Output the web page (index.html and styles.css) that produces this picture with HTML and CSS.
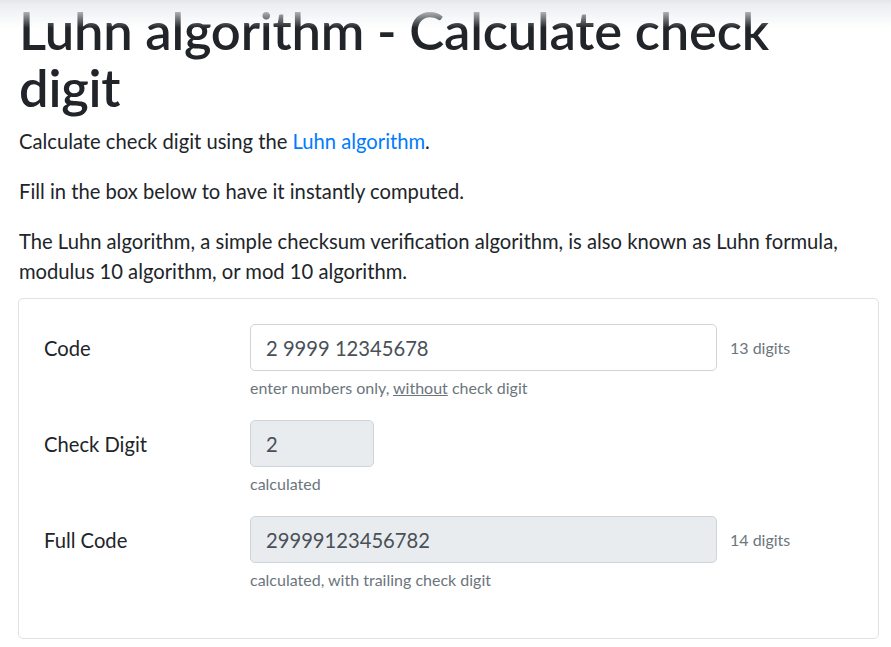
FILE: index.html
```html
<!DOCTYPE html>
<html lang="en">
<head>
<meta charset="utf-8">
<title>Luhn algorithm - Calculate check digit</title>
<link rel="stylesheet" href="styles.css">
</head>
<body>
<div class="topshade"></div>
<main class="container">
  <h1 class="title">Luhn algorithm - Calculate check digit</h1>
  <p>Calculate check digit using the <a href="#">Luhn algorithm</a>.</p>
  <p>Fill in the box below to have it instantly computed.</p>
  <p class="last-p">The Luhn algorithm, a simple checksum verification algorithm, is also known as Luhn formula, modulus 10 algorithm, or mod 10 algorithm.</p>
  <section class="card">
    <div class="form-row">
      <label class="label">Code</label>
      <div class="field">
        <div class="input-line">
          <div class="input wide">2 9999 12345678</div>
          <span class="count">13 digits</span>
        </div>
        <small class="help">enter numbers only, <u>without</u> check digit</small>
      </div>
    </div>
    <div class="form-row">
      <label class="label">Check Digit</label>
      <div class="field">
        <div class="input-line">
          <div class="input narrow disabled">2</div>
        </div>
        <small class="help">calculated</small>
      </div>
    </div>
    <div class="form-row last">
      <label class="label">Full Code</label>
      <div class="field">
        <div class="input-line">
          <div class="input wide disabled">29999123456782</div>
          <span class="count">14 digits</span>
        </div>
        <small class="help">calculated, with trailing check digit</small>
      </div>
    </div>
  </section>
</main>
</body>
</html>
```
FILE: styles.css
```css
html, body {
  margin: 0;
  padding: 0;
  background: #fff;
}
body {
  font-family: Lato, "Open Sans", sans-serif;
  font-size: 20.2px;
  line-height: 30px;
  color: #212529;
}
.topshade {
  position: fixed;
  top: 0;
  left: 0;
  right: 0;
  height: 28px;
  background: linear-gradient(to bottom, #e4e7ea 0px, #eceef0 5px, rgba(255,255,255,0) 28px);
  pointer-events: none;
}
.container {
  padding: 0 12px 0 18px;
}
.title {
  margin: 0 0 11px 1px;
  padding-top: 1px;
  font-size: 52.5px;
  line-height: 57px;
  font-weight: 600;
  letter-spacing: -0.2px;
}
p {
  margin: 0 0 20px 1px;
}
.last-p {
  margin-bottom: 12px;
}
a {
  color: #007bff;
  text-decoration: none;
}
.card {
  border: 1px solid #dfe2e5;
  border-radius: 5px;
  padding: 25px 25px 26px 25px;
}
.form-row {
  display: grid;
  grid-template-columns: 206px 1fr;
  margin-bottom: 20px;
}
.label {
  height: 47px;
  display: flex;
  align-items: center;
}
.input-line {
  display: flex;
  align-items: center;
  gap: 13px;
}
.input {
  box-sizing: border-box;
  height: 47px;
  border: 1px solid #ced4da;
  border-radius: 5px;
  padding: 0 15px;
  display: flex;
  align-items: center;
  color: #495057;
  background: #fff;
}
.input.wide { width: 467px; }
.input.narrow { width: 124px; }
.input.disabled { background: #e9ecef; }
.count {
  font-size: 16px;
  color: #6c757d;
}
.help {
  display: block;
  margin-top: 5px;
  font-size: 16px;
  line-height: 24px;
  color: #6c757d;
}
```
